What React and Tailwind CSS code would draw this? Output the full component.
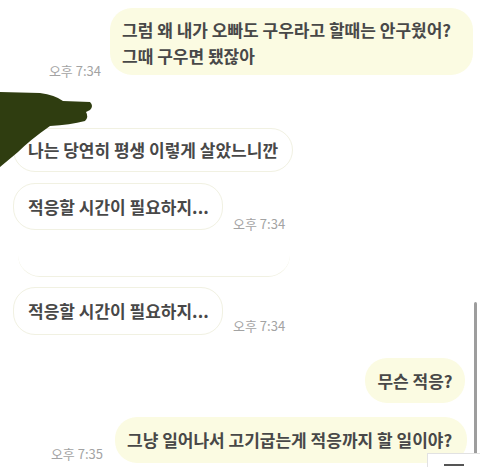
export default function App() {
  const font = { fontFamily: '"Noto Sans CJK KR", "Noto Sans", sans-serif' };

  return (
    <div
      className="relative w-[480px] h-[467px] overflow-hidden bg-white text-[#484848]"
      style={font}
    >
      <div className="flex flex-col pt-[8px]">
        {/* 1 - mine */}
        <div className="flex items-end justify-end pr-[7px]">
          <span className="mr-[9px] mb-[-3px] text-[13px] leading-[14px] text-[#a3a3a3]">오후 7:34</span>
          <div className="w-[363px] h-[67px] rounded-[22px] bg-[#fbfbe2] pl-[12px] pt-[9px] text-[17px] leading-[26px] font-bold">
            그럼 왜 내가 오빠도 구우라고 할때는 안구웠어?
            <br />
            그때 구우면 됐잖아
          </div>
        </div>

        {/* 2 */}
        <div className="mt-[53px] flex pl-[13px]">
          <div className="w-[280px] h-[44px] flex items-center rounded-[22px] border border-[#f1f1e2] bg-white pl-[14px] text-[17px] font-bold">
            나는 당연히 평생 이렇게 살았느니깐
          </div>
        </div>

        {/* 3 */}
        <div className="mt-[11px] flex items-end pl-[13px]">
          <div className="w-[210px] h-[47px] flex items-center rounded-[22px] border border-[#f1f1e2] bg-white pl-[14px] text-[17px] font-bold">
            적응할 시간이 필요하지...
          </div>
          <span className="ml-[10px] mb-[-1px] text-[13px] leading-[14px] text-[#a3a3a3]">오후 7:34</span>
        </div>

        {/* cut bubble */}
        <div className="mt-[15px] ml-[18px] w-[272px] h-[32px] rounded-b-[22px] border-b border-[#f1f1e2]" />

        {/* 4 */}
        <div className="mt-[10px] flex items-end pl-[13px]">
          <div className="w-[210px] h-[48px] flex items-center rounded-[22px] border border-[#f1f1e2] bg-white pl-[14px] text-[17px] font-bold">
            적응할 시간이 필요하지...
          </div>
          <span className="ml-[10px] mb-[2px] text-[13px] leading-[14px] text-[#a3a3a3]">오후 7:34</span>
        </div>

        {/* 5 - mine */}
        <div className="mt-[23px] flex justify-end pr-[15px]">
          <div className="w-[100px] h-[45px] flex items-center justify-center rounded-[22px] bg-[#fbfbe2] text-[17px] font-bold">
            무슨 적응?
          </div>
        </div>

        {/* 6 - mine */}
        <div className="mt-[14px] flex items-end justify-end pr-[13px]">
          <span className="mr-[12px] mb-[2px] text-[13px] leading-[14px] text-[#a3a3a3]">오후 7:35</span>
          <div className="w-[352px] h-[46px] flex items-center rounded-[22px] bg-[#fbfbe2] pl-[12px] text-[17px] font-bold">
            그냥 일어나서 고기굽는게 적응까지 할 일이야?
          </div>
        </div>
      </div>

      {/* redaction blob */}
      <svg className="absolute left-0 top-0" width="100" height="175" viewBox="0 0 100 175">
        <path
          d="M0 92 L40 93 Q55 95 63 101 L90 102 Q94 106 90 110 L86 112 Q89 117 85 121 Q70 125 50 126 Q30 140 18 152 L0 167 Z"
          fill="#2f3d10"
        />
      </svg>

      {/* scrollbar */}
      <div className="absolute right-[3px] top-[302px] w-[3px] h-[152px] rounded-full bg-[#9d9d9d]" />

      {/* corner box */}
      <div className="absolute right-0 top-[453px] w-[53px] h-[14px] border-l border-t border-[#e2e2e2] bg-white">
        <div className="absolute left-[16px] bottom-[1px] w-[20px] h-[2px] bg-[#555]" />
      </div>
    </div>
  );
}
